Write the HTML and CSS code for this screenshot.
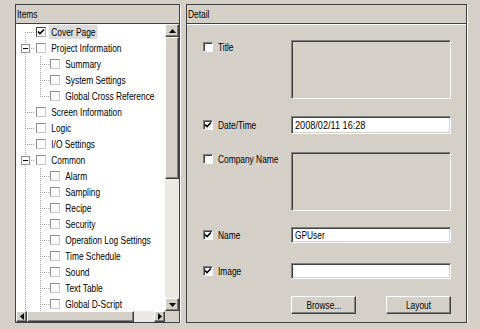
FILE: index.html
```html
<!DOCTYPE html>
<html lang="en">
<head>
  <meta charset="UTF-8">
  <title>Items / Detail</title>
  <link rel="stylesheet" href="styles.css">
</head>
<body>
<div class="window">
  <!-- left: item tree -->
  <div class="panel items">
    <div class="panel-head"><span class="t">Items</span></div>
    <div class="tree-body">
      <div class="tree">
        <div class="row"><span class="g first"></span><span class="cb on"><svg width="8" height="8" viewBox="0 0 8 8"><polyline points="1,3.5 3,5.5 7,1.5" fill="none" stroke="#000" stroke-width="1.6"/></svg></span><span class="lbl sel">Cover Page</span></div>
        <div class="row"><span class="g tee"><span class="exp"></span></span><span class="cb"></span><span class="lbl">Project Information</span></div>
        <div class="row"><span class="g cont"></span><span class="b tee"></span><span class="cb"></span><span class="lbl">Summary</span></div>
        <div class="row"><span class="g cont"></span><span class="b tee"></span><span class="cb"></span><span class="lbl">System Settings</span></div>
        <div class="row"><span class="g cont"></span><span class="b end"></span><span class="cb"></span><span class="lbl">Global Cross Reference</span></div>
        <div class="row"><span class="g tee"></span><span class="cb"></span><span class="lbl">Screen Information</span></div>
        <div class="row"><span class="g tee"></span><span class="cb"></span><span class="lbl">Logic</span></div>
        <div class="row"><span class="g tee"></span><span class="cb"></span><span class="lbl">I/O Settings</span></div>
        <div class="row"><span class="g tee"><span class="exp"></span></span><span class="cb"></span><span class="lbl">Common</span></div>
        <div class="row"><span class="g cont"></span><span class="b tee"></span><span class="cb"></span><span class="lbl">Alarm</span></div>
        <div class="row"><span class="g cont"></span><span class="b tee"></span><span class="cb"></span><span class="lbl">Sampling</span></div>
        <div class="row"><span class="g cont"></span><span class="b tee"></span><span class="cb"></span><span class="lbl">Recipe</span></div>
        <div class="row"><span class="g cont"></span><span class="b tee"></span><span class="cb"></span><span class="lbl">Security</span></div>
        <div class="row"><span class="g cont"></span><span class="b tee"></span><span class="cb"></span><span class="lbl">Operation Log Settings</span></div>
        <div class="row"><span class="g cont"></span><span class="b tee"></span><span class="cb"></span><span class="lbl">Time Schedule</span></div>
        <div class="row"><span class="g cont"></span><span class="b tee"></span><span class="cb"></span><span class="lbl">Sound</span></div>
        <div class="row"><span class="g cont"></span><span class="b tee"></span><span class="cb"></span><span class="lbl">Text Table</span></div>
        <div class="row"><span class="g cont"></span><span class="b tee"></span><span class="cb"></span><span class="lbl">Global D-Script</span></div>
      </div>
      <div class="vscroll">
        <div class="sb-btn"><svg width="7" height="4" viewBox="0 0 7 4"><polygon points="3.5,0 7,4 0,4" fill="#000"/></svg></div>
        <div class="sb-thumb v"></div>
        <div class="sb-track"></div>
        <div class="sb-btn"><svg width="7" height="4" viewBox="0 0 7 4"><polygon points="0,0 7,0 3.5,4" fill="#000"/></svg></div>
      </div>
    </div>
    <div class="tree-foot">
      <div class="hscroll">
        <div class="sb-btn w"><svg width="4" height="7" viewBox="0 0 4 7"><polygon points="4,0 4,7 0,3.5" fill="#000"/></svg></div>
        <div class="sb-thumb h"></div>
        <div class="sb-track"></div>
        <div class="sb-btn w"><svg width="4" height="7" viewBox="0 0 4 7"><polygon points="0,0 4,3.5 0,7" fill="#000"/></svg></div>
      </div>
      <div class="sb-corner"></div>
    </div>
  </div>

  <!-- right: detail form -->
  <div class="panel detail">
    <div class="panel-head"><span class="t">Detail</span></div>
    <div class="detail-body">
      <div class="field tall">
        <label class="chk top"><span class="cb3d"></span><span class="t">Title</span></label>
        <div class="box area"></div>
      </div>
      <div class="field f-date">
        <label class="chk"><span class="cb3d"><svg width="8" height="8" viewBox="0 0 8 8"><polyline points="1,3.5 3,5.5 7,1.5" fill="none" stroke="#000" stroke-width="1.6"/></svg></span><span class="t">Date/Time</span></label>
        <div class="box input date"><span class="t wide">2008/02/11 16:28</span></div>
      </div>
      <div class="field tall f-company">
        <label class="chk top"><span class="cb3d"></span><span class="t">Company Name</span></label>
        <div class="box area"></div>
      </div>
      <div class="field f-name">
        <label class="chk"><span class="cb3d"><svg width="8" height="8" viewBox="0 0 8 8"><polyline points="1,3.5 3,5.5 7,1.5" fill="none" stroke="#000" stroke-width="1.6"/></svg></span><span class="t">Name</span></label>
        <div class="box input"><span class="t">GPUser</span></div>
      </div>
      <div class="field f-image">
        <label class="chk"><span class="cb3d"><svg width="8" height="8" viewBox="0 0 8 8"><polyline points="1,3.5 3,5.5 7,1.5" fill="none" stroke="#000" stroke-width="1.6"/></svg></span><span class="t">Image</span></label>
        <div class="box input"></div>
      </div>
      <div class="buttons">
        <button class="btn"><span class="t">Browse...</span></button>
        <button class="btn"><span class="t">Layout</span></button>
      </div>
    </div>
  </div>
</div>
</body>
</html>
```

FILE: styles.css
```css
body {
    margin: 0;
    background: #d4d0c8;
    font-family: "Liberation Sans", Arial, sans-serif;
    font-size: 11px;
    color: #000;
}

/* the original UI font is narrow: squeeze Arial-width glyphs */
.t, .lbl {
    display: inline-block;
    transform: scaleX(.76);
    transform-origin: 0 50%;
    white-space: nowrap;
}

.t.wide {
    transform: scaleX(.83);
}

.window {
    display: flex;
    padding: 4px 0 0 15px;
}

.panel {
    border: 1px solid #404040;
    height: 319px;
    box-sizing: border-box;
    display: flex;
    flex-direction: column;
    box-shadow: 1px 1px 0 #fff;
}

.items {
    width: 165px;
}

.detail {
    width: 281px;
    margin-left: 6px;
}

.panel-head {
    height: 18px;
    line-height: 18px;
    border-bottom: 1px solid #404040;
    box-shadow: 0 1px 0 #fff;
    padding-left: 1px;
}

/* tree */
.tree-body {
    display: flex;
    height: 287px;
}

.tree {
    width: 149px;
    background: #fff;
    overflow: hidden;
}

.row {
    display: flex;
    align-items: center;
    height: 16px;
    white-space: nowrap;
}

.g, .b {
    flex: none;
    height: 16px;
    display: flex;
    align-items: center;
    background-repeat: no-repeat;
    --dot-v: repeating-linear-gradient(to bottom, #a0a0a0 0 1px, transparent 1px 2px);
    --dot-h: repeating-linear-gradient(to right, #a0a0a0 0 1px, transparent 1px 2px);
}

.g {
    width: 20px;
    padding-left: 5px;
    box-sizing: border-box;
}

.b {
    width: 14px;
}

.g.first {
    background-image: var(--dot-v), var(--dot-h);
    background-size: 1px 8px, 10px 1px;
    background-position: 9px 8px, 9px 8px;
}

.g.tee {
    background-image: var(--dot-v), var(--dot-h);
    background-size: 1px 16px, 10px 1px;
    background-position: 9px 0, 9px 8px;
}

.g.cont {
    background-image: var(--dot-v);
    background-size: 1px 16px;
    background-position: 9px 0;
}

.b.tee {
    background-image: var(--dot-v), var(--dot-h);
    background-size: 1px 16px, 10px 1px;
    background-position: 4px 0, 4px 8px;
}

.b.end {
    background-image: var(--dot-v), var(--dot-h);
    background-size: 1px 9px, 10px 1px;
    background-position: 4px 0, 4px 8px;
}

.exp {
    width: 9px;
    height: 9px;
    box-sizing: border-box;
    border: 1px solid #909090;
    background: #fff linear-gradient(#000, #000) no-repeat 1px 3px / 5px 1px;
}

.cb {
    flex: none;
    width: 10px;
    height: 10px;
    box-sizing: border-box;
    border: 1px solid;
    border-color: #8c8c8c #c8c8c8 #c8c8c8 #8c8c8c;
    background: #fff;
    display: flex;
    align-items: center;
    justify-content: center;
}

.cb.on {
    border-color: #404040 #b0b0b0 #b0b0b0 #404040;
}

.lbl {
    margin-left: 3px;
    padding: 0 3px;
    line-height: 14px;
}

.lbl.sel {
    background: #dcdcdc;
}

/* scrollbars */
.vscroll {
    width: 14px;
    display: flex;
    flex-direction: column;
}

.sb-btn, .sb-thumb {
    flex: none;
    background: #d4d0c8;
    border: 1px solid;
    border-color: #fff #404040 #404040 #fff;
    box-shadow: inset -1px -1px 0 #808080;
    box-sizing: border-box;
    display: flex;
    align-items: center;
    justify-content: center;
}

.vscroll .sb-btn {
    height: 13px;
}

.sb-thumb.v {
    height: 142px;
}

.sb-track {
    flex: 1;
    background: #ebe9e4;
}

.tree-foot {
    display: flex;
    height: 11px;
}

.hscroll {
    width: 149px;
    display: flex;
}

.sb-btn.w {
    width: 11px;
}

.sb-thumb.h {
    width: 107px;
}

.sb-corner {
    width: 14px;
    background: #d4d0c8;
}

/* detail form */
.detail-body {
    padding: 16px 0 0 16px;
}

.field {
    display: flex;
    align-items: center;
}

.field.tall {
    align-items: flex-start;
}

.f-date { margin-top: 17px; }
.f-company { margin-top: 18px; }
.f-name { margin-top: 16px; }
.f-image { margin-top: 20px; }

.chk {
    width: 88px;
    display: flex;
    align-items: center;
    height: 12px;
}

.chk.top {
    margin-top: 1px;
}

.cb3d {
    flex: none;
    width: 10px;
    height: 10px;
    box-sizing: border-box;
    margin-right: 5px;
    background: #fff;
    border: 1px solid;
    border-color: #808080 #fff #fff #808080;
    box-shadow: inset 1px 1px 0 #404040;
    display: flex;
    align-items: center;
    justify-content: center;
}

.box {
    width: 160px;
    box-sizing: border-box;
    border: 1px solid;
    border-color: #808080 #fff #fff #808080;
    box-shadow: inset 1px 1px 0 #404040, inset -1px -1px 0 #d4d0c8;
}

.box.area {
    height: 59px;
}

.box.input {
    height: 16px;
    line-height: 14px;
    padding-left: 3px;
    background: #fff;
}

.box.date {
    height: 18px;
    line-height: 16px;
}

.buttons {
    display: flex;
    justify-content: space-between;
    width: 160px;
    margin: 17px 0 0 88px;
}

.btn {
    width: 65px;
    height: 18px;
    padding: 0;
    font: inherit;
    color: #000;
    background: #d4d0c8;
    border: 1px solid;
    border-color: #fff #404040 #404040 #fff;
    box-shadow: inset -1px -1px 0 #808080;
}

.btn .t {
    transform-origin: 50% 50%;
}
```
